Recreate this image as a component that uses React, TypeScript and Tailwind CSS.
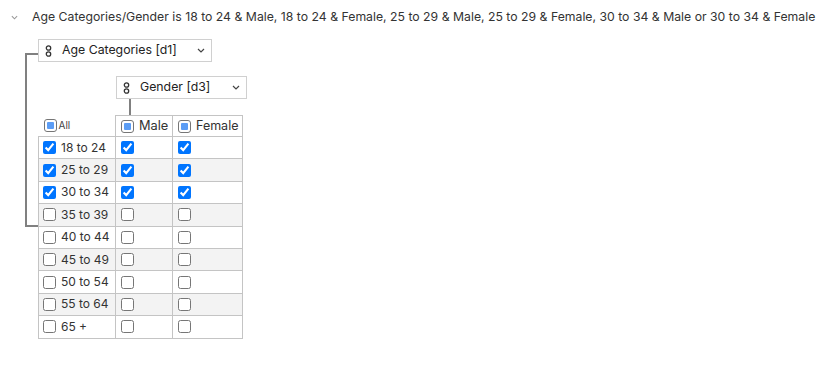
import { useState } from "react";

const ages = [
  "18 to 24",
  "25 to 29",
  "30 to 34",
  "35 to 39",
  "40 to 44",
  "45 to 49",
  "50 to 54",
  "55 to 64",
  "65 +",
];

const checkedAges = ["18 to 24", "25 to 29", "30 to 34"];

const Chevron = ({ className }: { className?: string }) => (
  <svg width="8" height="5" viewBox="0 0 8 5" className={className}>
    <path d="M1 1 L4 4 L7 1" fill="none" stroke="currentColor" strokeWidth="1.2" />
  </svg>
);

const LinkIcon = () => (
  <svg width="7" height="12" viewBox="0 0 7 12" className="text-[#333]">
    <circle cx="3.5" cy="3" r="2.2" fill="none" stroke="currentColor" strokeWidth="1.3" />
    <circle cx="3.5" cy="9" r="2.2" fill="none" stroke="currentColor" strokeWidth="1.3" />
  </svg>
);

const PartialBox = () => (
  <span className="inline-flex items-center justify-center w-[13px] h-[13px] border border-[#767676] rounded-[3px] bg-white shrink-0">
    <span className="w-[7px] h-[7px] bg-[#5c9df5] rounded-[1px]" />
  </span>
);

const Dropdown = ({ label, width }: { label: string; width: string }) => (
  <div
    className={`${width} h-[23px] flex items-center border border-[#d0d0d0] bg-white pl-[6px] pr-[6px] text-[12.3px] text-[#222]`}
  >
    <LinkIcon />
    <span className="ml-[10px] flex-1 whitespace-nowrap">{label}</span>
    <Chevron className="text-[#444]" />
  </div>
);

export default function App() {
  const [rows, setRows] = useState(
    ages.map((a) => ({
      age: a,
      all: checkedAges.includes(a),
      male: checkedAges.includes(a),
      female: checkedAges.includes(a),
    }))
  );

  const toggle = (i: number, key: "all" | "male" | "female") => {
    setRows((r) => r.map((row, idx) => (idx === i ? { ...row, [key]: !row[key] } : row)));
  };

  return (
    <div className="w-[839px] h-[378px] bg-white font-['Inter',sans-serif] text-[#333]">
      <div className="flex items-center h-[17px] pt-[9px] box-content pl-[11px]">
        <Chevron className="text-[#999] w-[7px]" />
        <span className="ml-[14px] text-[12.25px] text-[#333] whitespace-nowrap">
          Age Categories/Gender is 18 to 24 &amp; Male, 18 to 24 &amp; Female, 25 to 29 &amp; Male, 25 to 29 &amp; Female, 30 to 34 &amp; Male or 30 to 34 &amp; Female
        </span>
      </div>

      <div className="flex mt-[13px] pl-[25px]">
        <div className="w-[13px] h-[174px] mt-[14px] border-l-2 border-t-2 border-b-2 border-[#808080] shrink-0" />
        <div className="flex flex-col">
          <Dropdown label="Age Categories [d1]" width="w-[174px]" />
          <div className="ml-[78px] mt-[14px]">
            <Dropdown label="Gender [d3]" width="w-[131px]" />
          </div>
          <div className="ml-[91px] w-[2px] h-[16px] bg-[#808080]" />

          <table className="table-fixed w-[204px] border-collapse text-[12px] text-[#333]">
            <colgroup>
              <col className="w-[77px]" />
              <col className="w-[57px]" />
              <col className="w-[70px]" />
            </colgroup>
            <thead>
              <tr className="h-[21px]">
                <th className="p-0 font-normal text-left">
                  <div className="flex items-center pl-[5px] gap-[2px]">
                    <PartialBox />
                    <span className="text-[10px] text-[#444]">All</span>
                  </div>
                </th>
                <th className="p-0 font-normal text-left border border-[#c4c4c4]">
                  <div className="flex items-center pl-[5px] gap-[5px]">
                    <PartialBox />
                    <span className="text-[12.8px]">Male</span>
                  </div>
                </th>
                <th className="p-0 font-normal text-left border border-[#c4c4c4]">
                  <div className="flex items-center pl-[5px] gap-[5px]">
                    <PartialBox />
                    <span className="text-[12.5px]">Female</span>
                  </div>
                </th>
              </tr>
            </thead>
            <tbody>
              {rows.map((row, i) => (
                <tr key={row.age} className={`h-[22.4px] ${i % 2 === 1 ? "bg-[#f3f3f3]" : "bg-white"}`}>
                  <td className="p-0 border border-[#c4c4c4]">
                    <label className="flex items-center pl-[4px] gap-[5px]">
                      <input
                        type="checkbox"
                        checked={row.all}
                        onChange={() => toggle(i, "all")}
                        className="m-0 w-[13px] h-[13px]"
                      />
                      <span>{row.age}</span>
                    </label>
                  </td>
                  <td className="p-0 border border-[#c4c4c4]">
                    <div className="flex items-center pl-[5px]">
                      <input
                        type="checkbox"
                        checked={row.male}
                        onChange={() => toggle(i, "male")}
                        className="m-0 w-[13px] h-[13px]"
                      />
                    </div>
                  </td>
                  <td className="p-0 border border-[#c4c4c4]">
                    <div className="flex items-center pl-[5px]">
                      <input
                        type="checkbox"
                        checked={row.female}
                        onChange={() => toggle(i, "female")}
                        className="m-0 w-[13px] h-[13px]"
                      />
                    </div>
                  </td>
                </tr>
              ))}
            </tbody>
          </table>
        </div>
      </div>
    </div>
  );
}
